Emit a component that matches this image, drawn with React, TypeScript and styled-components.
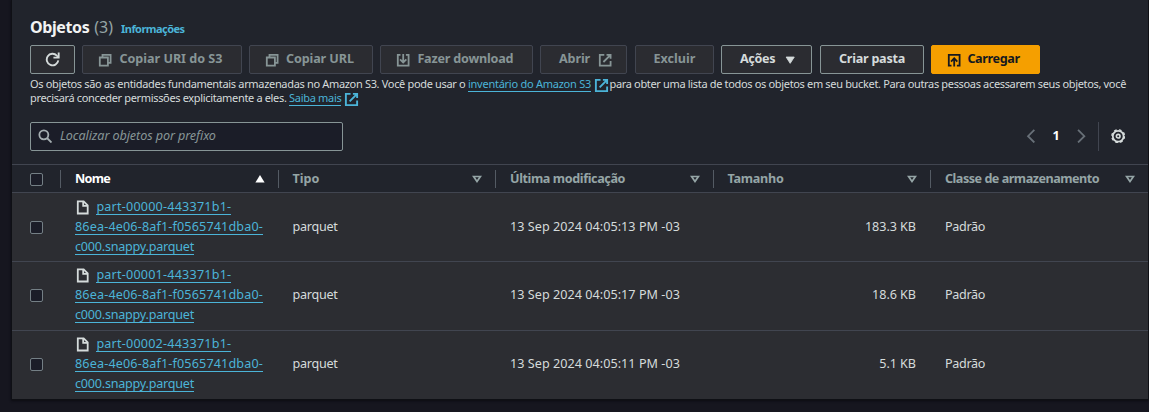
import React from "react";
import styled, { createGlobalStyle, css } from "styled-components";

const GlobalStyle = createGlobalStyle`
  * { box-sizing: border-box; }
  body {
    margin: 0;
    background: #16161f;
    color: #d5dbdb;
    font-family: "Noto Sans", "Open Sans", sans-serif;
    font-size: 12.6px;
    line-height: 19.8px;
    overflow: hidden;
  }
`;

const Page = styled.div`
  height: 412px;
  padding: 0 1px 0 12px;
`;

const Panel = styled.section`
  height: 399px;
  background: #21242c;
  box-shadow: 0 0 0 1px #0f1015, 0 1px 2px 1px #0c0c12;
`;

const Header = styled.header`
  height: 164px;
  padding: 17px 18px 0;
`;

const Tracked = styled.span<{ $ls: number }>`
  letter-spacing: ${(p) => p.$ls}px;
  white-space: pre;
`;

const TitleRow = styled.div`
  display: flex;
  align-items: baseline;
  height: 28px;
  font-size: 16px;
  line-height: 20px;
`;

const Title = styled.h2`
  margin: 0;
  font-size: 16px;
  color: #f2f3f3;
  letter-spacing: -0.4px;
`;

const Count = styled.span`
  margin-left: 5px;
  color: #95a5a6;
`;

const InfoLink = styled.a`
  margin-left: 8px;
  font-size: 11px;
  font-weight: 700;
  letter-spacing: -0.54px;
  color: #4bb4d8;
`;

const Toolbar = styled.div`
  display: flex;
  height: 29px;
`;

type Kind = "normal" | "disabled" | "primary";

const kinds = {
  normal: css`
    border-color: #879596;
    color: #d5dbdb;
  `,
  disabled: css`
    border-color: #414550;
    color: #879596;
  `,
  primary: css`
    border-color: #f59f00;
    background: #f59f00;
    color: #16191f;
  `,
};

const Button = styled.button<{ $w: number; $gap?: number; $pl?: number; $kind: Kind }>`
  display: flex;
  align-items: center;
  justify-content: ${(p) => (p.$pl ? "flex-start" : "center")};
  width: ${(p) => p.$w}px;
  height: 29px;
  margin: 0 ${(p) => p.$gap ?? 0}px 0 0;
  padding: 0 0 1px ${(p) => p.$pl ?? 0}px;
  border: 1px solid;
  border-radius: 2px;
  background: #2b2c31;
  font: inherit;
  font-weight: 700;
  white-space: nowrap;
  ${(p) => kinds[p.$kind]}
`;

const Icon = styled.svg<{ $l?: number; $r?: number; $t?: number; $size?: number }>`
  flex: none;
  width: ${(p) => p.$size ?? 14.4}px;
  height: ${(p) => p.$size ?? 14.4}px;
  margin: ${(p) => p.$t ?? 3}px ${(p) => p.$r ?? 0}px 0 ${(p) => p.$l ?? 0}px;
  fill: none;
  stroke: currentColor;
  stroke-width: 2;
`;

const Description = styled.p`
  margin: 3px 0 0;
  font-size: 11px;
  line-height: 14px;
  white-space: nowrap;
`;

const DescriptionLine = styled.span`
  display: flex;
  height: 14px;
`;

const SmallLink = styled.a<{ $ls: number }>`
  height: 15px;
  border-bottom: 1px solid #4bb4d8;
  color: #4bb4d8;
  letter-spacing: ${(p) => p.$ls}px;
`;

const LinkIcon = styled(Icon)`
  color: #4bb4d8;
  margin: 1px 1px 0 2.5px;
  width: 15px;
  height: 15px;
`;

const Controls = styled.div`
  display: flex;
  align-items: center;
  height: 30px;
  margin-top: 16px;
`;

const Search = styled.div`
  display: flex;
  align-items: center;
  width: 313px;
  height: 29px;
  margin-right: auto;
  padding-left: 6.5px;
  border: 1px solid #879596;
  border-radius: 2px;
  background: #1b1d28;
  color: #a4adb0;
`;

const Placeholder = styled.span`
  margin-left: 8px;
  font-style: italic;
  letter-spacing: -0.09px;
  color: #879596;
`;

const Pager = styled.div`
  display: flex;
  align-items: center;
  height: 29px;
  padding-right: 9px;
  border-right: 1px solid #414550;
  color: #687078;
`;

const PageNumber = styled.b`
  width: 36px;
  text-align: center;
  color: #fff;
`;

const Settings = styled.span`
  display: flex;
  margin: 0 5px 0 12px;
  color: #d5dbdb;
`;

const grid = css`
  display: grid;
  grid-template-columns: 48px 217.5px 217.5px 217.5px 217.5px 1fr;
`;

const HeadRow = styled.div`
  ${grid}
  height: 29px;
  align-items: center;
  border-top: 1px solid #414550;
  border-bottom: 1px solid #414550;
`;

const HeadCell = styled.div<{ $active?: boolean }>`
  display: flex;
  align-items: center;
  justify-content: space-between;
  height: 18px;
  padding: 0 13px 0 14px;
  border-left: 1px solid #545b64;
  font-weight: 700;
  color: ${(p) => (p.$active ? "#ffffff" : "#95a5a6")};
  white-space: nowrap;
`;

const Sort = styled.svg`
  flex: none;
  width: 10px;
  height: 8px;
  margin-top: 1px;
`;

const Row = styled.div`
  ${grid}
  height: 69px;
  align-items: center;
  background: #2c2d32;
  border-bottom: 1px solid #414550;
  & + & { padding-bottom: 2px; }
  &:last-child { border-bottom: 0; height: 68px; }
`;

const CheckCell = styled.div`
  padding-left: 18px;
`;

const Checkbox = styled.span`
  display: block;
  width: 13px;
  height: 13px;
  margin-top: 1px;
  border: 1px solid #747f85;
  border-radius: 2px;
  background: #1b1d28;
`;

const Cell = styled.div<{ $right?: boolean; $ls: number }>`
  padding: 0 14px 0 15px;
  text-align: ${(p) => (p.$right ? "right" : "left")};
  letter-spacing: ${(p) => p.$ls}px;
  white-space: nowrap;
`;

const NameCell = styled.div`
  display: flex;
  flex-direction: column;
  align-items: flex-start;
  height: 59.4px;
  padding-left: 15px;
  white-space: nowrap;
`;

const NameLine = styled.span`
  display: flex;
  height: 19.8px;
`;

const NameLink = styled.a<{ $ls: number }>`
  height: 18px;
  line-height: 19px;
  border-bottom: 1px solid #4bb4d8;
  color: #4bb4d8;
  letter-spacing: ${(p) => p.$ls}px;
`;

const CopyIcon = () => (
  <Icon viewBox="0 0 16 16" $r={7}>
    <path d="M2 5h9v9H2z" />
    <path d="M5 5V2h9v9h-3" />
  </Icon>
);

const DownloadIcon = () => (
  <Icon viewBox="0 0 16 16" $r={7}>
    <path d="M5 2H2v12h12V2h-3" />
    <path d="M8 1v9M4.5 7 8 10.5 11.5 7" />
  </Icon>
);

const UploadIcon = () => (
  <Icon viewBox="0 0 16 16" $r={6}>
    <path d="M5 14H2V2h12v12h-3" />
    <path d="M8 15V6M4.5 9.5 8 6l3.5 3.5" />
  </Icon>
);

const externalPaths = (
  <>
    <path d="M7 2H2v12h12V9" />
    <path d="M9.5 2H14v4.5M6 10l8-8" />
  </>
);

const FileIcon = () => (
  <Icon viewBox="0 0 16 16" $l={1} $r={6}>
    <path d="M2 1.5h6.5L13 6v9H2z" />
    <path d="M8 1.5v5h5" />
  </Icon>
);

const SortMark = ({ active }: { active?: boolean }) => (
  <Sort viewBox="0 0 10 8">
    {active ? (
      <path d="M5 0 9.6 7.5H.4z" fill="#fff" />
    ) : (
      <path d="M1.6 1.5h6.8L5 6.5z" fill="none" stroke="#95a5a6" strokeWidth="1.7" />
    )}
  </Sort>
);

const columns: [string, number][] = [
  ["Nome", -0.7],
  ["Tipo", 0],
  ["Última modificação", -0.39],
  ["Tamanho", -0.27],
  ["Classe de armazenamento", -0.49],
];

const files = [
  { part: "part-00000-443371b1-", date: "13 Sep 2024 04:05:13 PM -03", size: "183.3 KB" },
  { part: "part-00001-443371b1-", date: "13 Sep 2024 04:05:17 PM -03", size: "18.6 KB" },
  { part: "part-00002-443371b1-", date: "13 Sep 2024 04:05:11 PM -03", size: "5.1 KB" },
];

export default function App() {
  return (
    <Page>
      <GlobalStyle />
      <Panel>
        <Header>
          <TitleRow>
            <Title>Objetos</Title>
            <Count>(3)</Count>
            <InfoLink>Informações</InfoLink>
          </TitleRow>
          <Toolbar>
            <Button $kind="normal" $w={45} $gap={7}>
              <Icon viewBox="0 0 16 16" $size={15} $t={1}>
                <path d="M14.2 9A6.2 6.2 0 1 1 12.6 3.8L14 5.2" />
                <path d="M14.6 .5V6H9" />
              </Icon>
            </Button>
            <Button $kind="disabled" $w={160} $gap={7} $pl={15}>
              <CopyIcon />
              <Tracked $ls={-0.02}>Copiar URI do S3</Tracked>
            </Button>
            <Button $kind="disabled" $w={124} $gap={7} $pl={14.5}>
              <CopyIcon />
              <Tracked $ls={-0.1}>Copiar URL</Tracked>
            </Button>
            <Button $kind="disabled" $w={153} $gap={7} $pl={15}>
              <DownloadIcon />
              <Tracked $ls={-0.2}>Fazer download</Tracked>
            </Button>
            <Button $kind="disabled" $w={87} $gap={8} $pl={18}>
              <Tracked $ls={-0.14}>Abrir</Tracked>
              <Icon viewBox="0 0 16 16" $l={7.5}>{externalPaths}</Icon>
            </Button>
            <Button $kind="disabled" $w={79} $gap={7}>
              <Tracked $ls={0}>Excluir</Tracked>
            </Button>
            <Button $kind="normal" $w={91} $gap={8} $pl={18}>
              <Tracked $ls={-0.35}>Ações</Tracked>
              <Icon viewBox="0 0 16 16" $l={8}>
                <path d="M3.5 4.5h9L8 11.5z" fill="currentColor" strokeWidth="1" />
              </Icon>
            </Button>
            <Button $kind="normal" $w={104} $gap={7}>
              <Tracked $ls={-0.25}>Criar pasta</Tracked>
            </Button>
            <Button $kind="primary" $w={109} $pl={15}>
              <UploadIcon />
              <Tracked $ls={-0.38}>Carregar</Tracked>
            </Button>
          </Toolbar>
          <Description>
            <DescriptionLine>
              <Tracked $ls={-0.328}>
                {"Os objetos são as entidades fundamentais armazenadas no Amazon S3. Você pode usar o "}
              </Tracked>
              <SmallLink $ls={-0.254}>inventário do Amazon S3</SmallLink>
              <LinkIcon viewBox="0 0 16 16">{externalPaths}</LinkIcon>
              <Tracked $ls={-0.337}>
                para obter uma lista de todos os objetos em seu bucket. Para outras pessoas acessarem seus objetos, você
              </Tracked>
            </DescriptionLine>
            <DescriptionLine>
              <Tracked $ls={-0.342}>{"precisará conceder permissões explicitamente a eles. "}</Tracked>
              <SmallLink $ls={-0.3}>Saiba mais</SmallLink>
              <LinkIcon viewBox="0 0 16 16">{externalPaths}</LinkIcon>
            </DescriptionLine>
          </Description>
          <Controls>
            <Search>
              <Icon viewBox="0 0 16 16" $t={0}>
                <circle cx="6.5" cy="6.5" r="5" />
                <path d="m10 10 5 5" />
              </Icon>
              <Placeholder>Localizar objetos por prefixo</Placeholder>
            </Search>
            <Pager>
              <Icon viewBox="0 0 16 16" $t={0}>
                <path d="M11.5 1 4.5 8l7 7" />
              </Icon>
              <PageNumber>1</PageNumber>
              <Icon viewBox="0 0 16 16" $t={0}>
                <path d="m4.5 1 7 7-7 7" />
              </Icon>
            </Pager>
            <Settings>
              <Icon viewBox="0 0 16 16" $t={0}>
                <circle cx="8" cy="8" r="6" />
                <circle cx="8" cy="8" r="7.1" strokeWidth="1.5" strokeDasharray="3 2.576" />
                <circle cx="8" cy="8" r="2" strokeWidth="1.8" />
              </Icon>
            </Settings>
          </Controls>
        </Header>
        <HeadRow>
          <CheckCell>
            <Checkbox />
          </CheckCell>
          {columns.map(([label, ls], i) => (
            <HeadCell key={label} $active={i === 0}>
              <Tracked $ls={ls}>{label}</Tracked>
              <SortMark active={i === 0} />
            </HeadCell>
          ))}
        </HeadRow>
        <div>
          {files.map((f) => (
            <Row key={f.part}>
              <CheckCell>
                <Checkbox />
              </CheckCell>
              <NameCell>
                <NameLine>
                  <FileIcon />
                  <NameLink $ls={0.2}>{f.part}</NameLink>
                </NameLine>
                <NameLine>
                  <NameLink $ls={0.15}>86ea-4e06-8af1-f0565741dba0-</NameLink>
                </NameLine>
                <NameLine>
                  <NameLink $ls={-0.23}>c000.snappy.parquet</NameLink>
                </NameLine>
              </NameCell>
              <Cell $ls={-0.27}>parquet</Cell>
              <Cell $ls={0.04}>{f.date}</Cell>
              <Cell $ls={-0.05} $right>{f.size}</Cell>
              <Cell $ls={-0.34}>Padrão</Cell>
            </Row>
          ))}
        </div>
      </Panel>
    </Page>
  );
}
